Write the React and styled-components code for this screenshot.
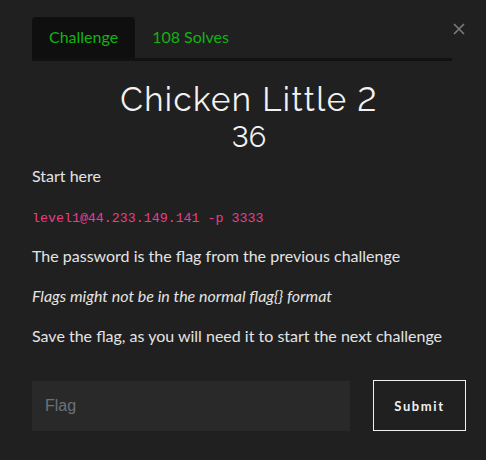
import React from "react";
import styled, { createGlobalStyle } from "styled-components";

const Global = createGlobalStyle`
  html, body { margin: 0; padding: 0; background: #202020; }
  body { font-family: Lato, "Open Sans", sans-serif; color: #e4e4e4; }
  * { box-sizing: border-box; }
`;

const Modal = styled.div`
  position: relative;
  width: 486px;
  height: 460px;
  padding: 17px 20px 0 32px;
`;

const Close = styled.button`
  position: absolute;
  top: 23px;
  left: 453px;
  width: 12px;
  height: 12px;
  padding: 0;
  border: 0;
  background: none;
  display: flex;
`;

const Tabs = styled.div`
  display: flex;
  width: 420px;
  border-bottom: 3px solid #121212;
`;

const Tab = styled.div`
  padding: 8px 17px 9px 17px;
  font-size: 16px;
  line-height: 24px;
  color: #12b312;
  background: ${(p) => (p.$active ? "#0f0f0f" : "transparent")};
  border-radius: 4px 4px 0 0;
`;

const Title = styled.h2`
  margin: 19px 0 0;
  width: 434px;
  text-align: center;
  font-family: Raleway, Lato, sans-serif;
  font-weight: 400;
  font-variant-numeric: lining-nums;
  font-size: 33px;
  letter-spacing: 1.4px;
  line-height: 40px;
  color: #f2f2f2;
`;

const Value = styled.h3`
  margin: 0;
  width: 434px;
  text-align: center;
  font-family: Raleway, Lato, sans-serif;
  font-variant-numeric: lining-nums;
  font-weight: 400;
  font-size: 29px;
  line-height: 34px;
  color: #f2f2f2;
`;

const Body = styled.div`
  margin-top: 10px;
`;

const P = styled.p`
  margin: 0 0 16px;
  font-size: 16px;
  line-height: 24px;
  font-style: ${(p) => (p.$italic ? "italic" : "normal")};
`;

const Code = styled.code`
  font-family: "Liberation Mono", monospace;
  font-size: 13.3px;
  line-height: 1;
  color: #e83e8c;
`;

const Form = styled.form`
  display: flex;
  gap: 23px;
  margin-top: 32px;
`;

const Input = styled.input`
  width: 318px;
  height: 50px;
  margin-top: 1px;
  border: 0;
  background: #292929;
  padding: 0 13px;
  font-family: "Liberation Sans", Arial, sans-serif;
  font-size: 16px;
  color: #ddd;
  outline: none;
  &::placeholder { color: #6c7178; }
`;

const Submit = styled.button`
  width: 93px;
  height: 51px;
  border: 1px solid #f0f0f0;
  background: transparent;
  color: #f0f0f0;
  font-family: Lato, sans-serif;
  font-weight: 700;
  font-size: 13px;
  letter-spacing: 1.6px;
`;

export default function App() {
  return (
    <>
      <Global />
      <Modal>
        <Close aria-label="Close">
          <svg width="12" height="12" viewBox="0 0 12 12">
            <path d="M1 1 L11 11 M11 1 L1 11" stroke="#7c7c7c" strokeWidth="1.6" />
          </svg>
        </Close>
        <Tabs>
          <Tab $active>Challenge</Tab>
          <Tab>108 Solves</Tab>
        </Tabs>
        <Title>Chicken Little 2</Title>
        <Value>36</Value>
        <Body>
          <P>Start here</P>
          <P><Code>level1@44.233.149.141 -p 3333</Code></P>
          <P>The password is the flag from the previous challenge</P>
          <P $italic>Flags might not be in the normal flag{"{}"} format</P>
          <P>Save the flag, as you will need it to start the next challenge</P>
        </Body>
        <Form onSubmit={(e) => e.preventDefault()}>
          <Input placeholder="Flag" />
          <Submit type="submit">Submit</Submit>
        </Form>
      </Modal>
    </>
  );
}
